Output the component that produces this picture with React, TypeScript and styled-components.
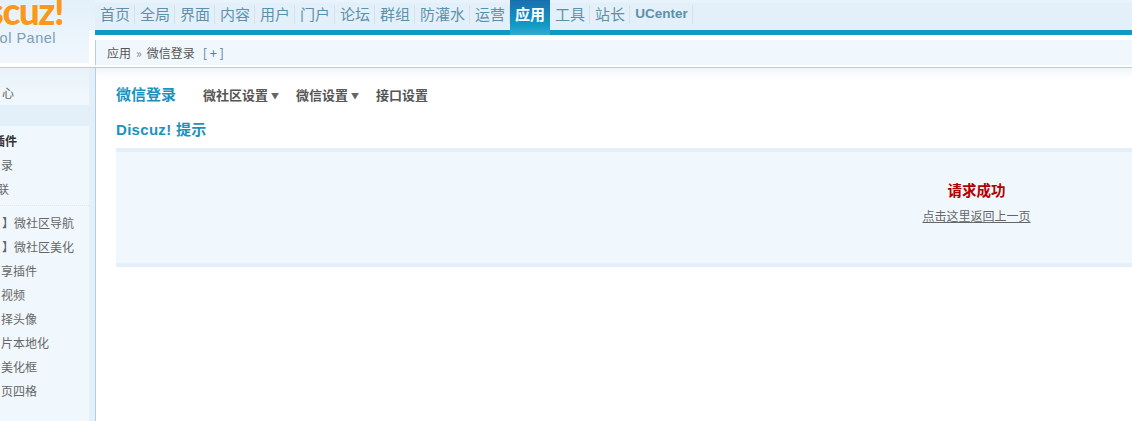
import React from "react";
import styled, { createGlobalStyle } from "styled-components";

const Global = createGlobalStyle`
  html, body { margin: 0; padding: 0; background: #fff; }
  body { width: 1132px; height: 421px; overflow: hidden; font: 12px/1.5 "Noto Sans CJK SC", sans-serif; color: #666; }
  * { box-sizing: border-box; }
`;
const Page = styled.div`display: grid; grid-template-columns: 95px 1fr; grid-template-rows: 68px 353px; width: 1132px; height: 421px; overflow: hidden;`;
const Logo = styled.div`
  position: relative; overflow: hidden; background: linear-gradient(#e3f0fa, #f1f8fd);
  border-bottom: 1px solid #b5cfe0; box-shadow: inset 0 -4px 0 #fff;
  &::after { content: ""; position: absolute; right: 0; top: 30px; bottom: 0; width: 6px; background: #fff; }
`;
const LogoWord = styled.div`position: absolute; right: 32px; top: -7px; font: 900 37px/36px "Lato", sans-serif; color: #f8981d; letter-spacing: -1.5px; white-space: nowrap; text-shadow: 0 0 2px #fff;`;
const LogoSub = styled.div`position: absolute; right: 39px; top: 29px; font: 14.5px/18px "Liberation Sans", sans-serif; color: #7d9db3; letter-spacing: .5px; white-space: nowrap;`;
const Head = styled.div`display: flex; flex-direction: column; background: #fff; border-bottom: 1px solid #b5cfe0;`;
const Nav = styled.div`height: 35px; display: flex; align-items: flex-start; background: linear-gradient(#e9f3fb 2px, #e3f0fa 3px); border-bottom: 5px solid #0f9ac6;`;
const Tab = styled.div<{ $on?: boolean; $latin?: boolean; $w?: number }>`
  width: ${(p) => p.$w ?? 40}px; height: 35px; flex: none; text-align: center; position: relative;
  font: ${(p) => (p.$latin ? "bold 13.5px/28px \"Liberation Sans\"" : "15px/28px \"Noto Sans CJK SC\"")}, sans-serif;
  color: ${(p) => (p.$on ? "#fff" : "#5f90a9")};
  font-weight: ${(p) => (p.$on || p.$latin ? 700 : 400)};
  background: ${(p) => (p.$on ? "linear-gradient(#1a6fae, #0f9ac6 70%, #36a9cf)" : "none")};
  &::after { content: ""; display: ${(p) => (p.$on ? "none" : "block")}; position: absolute; right: 0; top: 5px; height: 19px; width: 1px; background: #d3e3ee; }
`;
const Crumb = styled.div`margin-top: 5px; height: 25px; display: flex; align-items: center; padding-left: 11px; gap: 5px; background: #f1f8fd; border-left: 1px solid #b5cfe0; color: #555; font-size: 12px; white-space: nowrap;`;
const CrumbSep = styled.span`color: #888;`;
const CrumbAdd = styled.span`color: #5b7fa8; margin-left: 3px; font-size: 13px; letter-spacing: 2.5px;`;
const Side = styled.div`background: linear-gradient(#e8f2fa, #f1f8fd 30px); position: relative; overflow: hidden; &::after { content: ""; position: absolute; right: 0; top: 0; bottom: 0; width: 6px; background: #e3f0fa; }`;
const SideList = styled.div`display: flex; flex-direction: column; padding-top: 13px; width: 89px;`;
const SideRow = styled.div<{ $left: number }>`height: 24px; flex: none; margin-left: ${(p) => p.$left}px; font-size: 12px; line-height: 24px; white-space: nowrap; color: #666;`;
const SideHeading = styled(SideRow)`margin-top: 3px; color: #333; font-weight: 700;`;
const SideActive = styled.div`height: 21px; background: #e3f0fa;`;
const Rule = styled.div`border-top: 1px dotted #dfe8ee; margin: 4px 0 5px;`;
const Main = styled.div`border-left: 1px solid #b5cfe0; padding: 13px 0 0 20px; background: linear-gradient(#eef6fb, #fff 10px) no-repeat; overflow: hidden;`;
const TitleRow = styled.div`display: flex; align-items: center; height: 27px; white-space: nowrap;`;
const Title = styled.div`font-size: 15px; font-weight: 700; color: #1c93bd; width: 87px;`;
const Menu = styled.div<{ $w: number }>`font-size: 13px; font-weight: 700; color: #555; width: ${(p) => p.$w}px;`;
const Caret = styled.span`font-size: 8px; margin-left: 3px; color: #666; vertical-align: 1px;`;
const Hint = styled.div`font: bold 15px/21px "Liberation Sans", "Noto Sans CJK SC", sans-serif; letter-spacing: .3px; color: #1c93bd; margin-top: 11px;`;
const Box = styled.div`margin-top: 8px; height: 119px; width: 1016px; background: #f1f8fd; border-top: 4px solid #e3f0fa; border-bottom: 4px solid #e3f0fa; padding-top: 27px;`;
const BoxInner = styled.div`width: 1721px; text-align: center;`;
const Ok = styled.div`font-size: 14.5px; line-height: 21px; font-weight: 700; color: #b00000;`;
const Back = styled.div`font-size: 12px; line-height: 18px; margin-top: 7px; color: #666; text-decoration: underline;`;

const tabs: [string, number?][] = [["首页"],["全局"],["界面"],["内容"],["用户"],["门户"],["论坛"],["群组"],["防灌水",55],["运营"],["应用"],["工具"],["站长"],["UCenter",63]];
export default function App() {
  return (
    <Page>
      <Global />
      <Logo><LogoWord>scuz!</LogoWord><LogoSub>ol Panel</LogoSub></Logo>
      <Head>
        <Nav>{tabs.map(([t, w]) => <Tab key={t} $w={w} $on={t==="应用"} $latin={t==="UCenter"}>{t}</Tab>)}</Nav>
        <Crumb>应用 <CrumbSep>»</CrumbSep> 微信登录 <CrumbAdd>[+]</CrumbAdd></Crumb>
      </Head>
      <Side>
        <SideList>
          <SideRow $left={2}>心</SideRow>
          <SideActive />
          <SideHeading $left={-7}>插件</SideHeading>
          <SideRow $left={1}>录</SideRow>
          <SideRow $left={-3}>联</SideRow>
          <Rule />
          <SideRow $left={2}>】微社区导航</SideRow>
          <SideRow $left={2}>】微社区美化</SideRow>
          <SideRow $left={1}>享插件</SideRow>
          <SideRow $left={1}>视频</SideRow>
          <SideRow $left={1}>择头像</SideRow>
          <SideRow $left={1}>片本地化</SideRow>
          <SideRow $left={1}>美化框</SideRow>
          <SideRow $left={1}>页四格</SideRow>
        </SideList>
      </Side>
      <Main>
        <TitleRow>
          <Title>微信登录</Title>
          <Menu $w={93}>微社区设置<Caret>▼</Caret></Menu>
          <Menu $w={80}>微信设置<Caret>▼</Caret></Menu>
          <Menu $w={60}>接口设置</Menu>
        </TitleRow>
        <Hint>Discuz! 提示</Hint>
        <Box><BoxInner><Ok>请求成功</Ok><Back>点击这里返回上一页</Back></BoxInner></Box>
      </Main>
    </Page>
  );
}
